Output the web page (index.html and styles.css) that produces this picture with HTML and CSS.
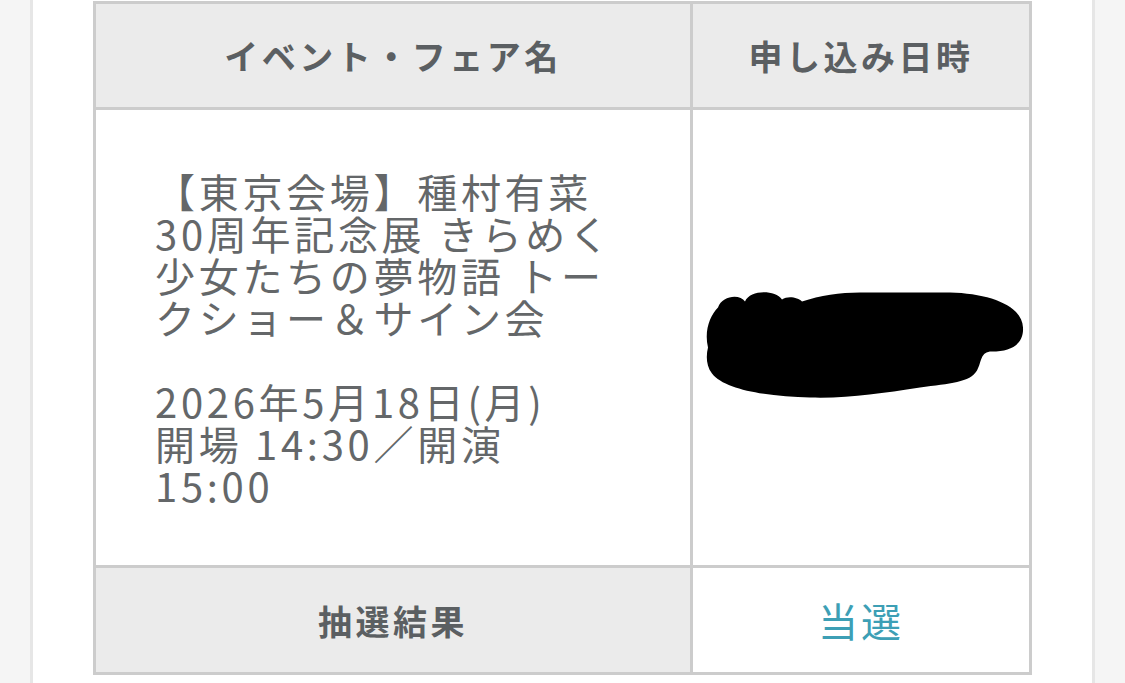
FILE: index.html
```html
<!DOCTYPE html>
<html lang="ja">
<head>
<meta charset="utf-8">
<title>抽選結果</title>
<link rel="stylesheet" href="styles.css">
</head>
<body>
<div class="page">
  <div class="sheet">
    <div class="result-table">
      <div class="cell head">イベント・フェア名</div>
      <div class="cell head">申し込み日時</div>
      <div class="cell event"><p class="event-text">【東京会場】種村有菜30周年記念展 きらめく少女たちの夢物語 トークショー＆サイン会<br><br>2026年5月18日(月)<br>開場 14:30／開演15:00</p></div>
      <div class="cell date">
        <svg class="redact" width="330" height="120" viewBox="0 0 330 120" aria-hidden="true">
          <g transform="translate(4 7.5)">
            <path d="M8 62 C4 45 10 30 18 22 C22 10 40 8 45 16 C50 4 75 4 82 14 C88 10 98 12 102 16 C120 10 140 7 160 7 L250 7 C290 8 322 20 323 42 C324 58 312 66 292 66 C280 66 282 76 277 85 C270 97 250 98 220 102 C180 108 150 113 110 112 C70 111 25 105 12 88 C6 80 6 70 8 62 Z" fill="#000"/>
          </g>
        </svg>
      </div>
      <div class="cell head">抽選結果</div>
      <div class="cell status">当選</div>
    </div>
  </div>
</div>
</body>
</html>
```

FILE: styles.css
```css
html, body {
  margin: 0;
  padding: 0;
}
body {
  background: #f5f5f5;
  font-family: "Noto Sans CJK JP", "Noto Sans", sans-serif;
}
.page {
  padding: 0 30px;
  height: 683px;
  overflow: hidden;
}
.sheet {
  background: #fff;
  border-left: 3px solid #e6e6e6;
  border-right: 3px solid #e6e6e6;
  height: 683px;
  box-sizing: border-box;
  padding: 1px 60px 0;
}
.result-table {
  display: grid;
  grid-template-columns: 594px 336px;
  grid-template-rows: 103px 455px 104px;
  gap: 3px;
  padding: 3px;
  background: #cccccc;
  width: 939px;
  box-sizing: border-box;
}
.cell {
  background: #fff;
  display: flex;
  align-items: center;
  justify-content: center;
}
.head {
  background: #ebebeb;
  color: #5b5f62;
  font-weight: 700;
  font-size: 34px;
  letter-spacing: 3.5px;
}
.event {
  justify-content: flex-start;
  padding-left: 59px;
}
.event-text {
  margin: 0;
  width: 462px;
  color: #646769;
  font-size: 40px;
  letter-spacing: 3.7px;
  line-height: 42px;
}
.status {
  color: #3d9fb5;
  font-size: 40px;
  letter-spacing: 3px;
}
.redact {
  display: block;
}
```
